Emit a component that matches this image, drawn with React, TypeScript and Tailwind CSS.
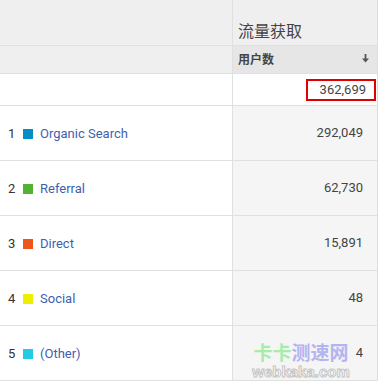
import React from "react";

type Row = {
  rank: number;
  label: string;
  color: string;
  users: string;
};

const rows: Row[] = [
  { rank: 1, label: "Organic Search", color: "bg-[#058dc7]", users: "292,049" },
  { rank: 2, label: "Referral", color: "bg-[#50b432]", users: "62,730" },
  { rank: 3, label: "Direct", color: "bg-[#ed561b]", users: "15,891" },
  { rank: 4, label: "Social", color: "bg-[#edef00]", users: "48" },
  { rank: 5, label: "(Other)", color: "bg-[#24cbe5]", users: "4" },
];

const font = "font-['Roboto','Noto_Sans_CJK_SC',sans-serif]";

export default function App() {
  return (
    <div className={`relative w-[378px] bg-white border-r border-[#dedede] text-[#333] ${font}`}>
      {/* group header */}
      <div className="flex h-[46px] border-b border-[#e0e0e0] bg-[#efefef]">
        <div className="w-[232px]" />
        <div className="flex flex-1 items-end border-l border-[#e0e0e0] pl-[5px] pb-[3px]">
          <span className="text-[16px] leading-[20px] text-[#444]">流量获取</span>
        </div>
      </div>

      {/* column header */}
      <div className="flex h-[28px] border-b border-[#e0e0e0] bg-[#efefef]">
        <div className="w-[232px]" />
        <div className="flex flex-1 items-center justify-between border-l border-[#e0e0e0] bg-[#e6e6e6] pl-[5px] pr-[8px]">
          <span className="text-[12px] font-bold text-[#444]">用户数</span>
          <svg width="7" height="9" viewBox="0 0 7 9" className="mb-[3px]">
            <rect x="2.6" y="0" width="1.8" height="5" fill="#555" />
            <path d="M0 4.5 L7 4.5 L3.5 8.5 Z" fill="#555" />
          </svg>
        </div>
      </div>

      {/* total */}
      <div className="flex h-[32px] border-b border-[#e0e0e0]">
        <div className="w-[232px]" />
        <div className="flex flex-1 items-center justify-end border-l border-[#e0e0e0] pr-[1px] pt-[1px]">
          <div className="flex h-[22px] w-[70px] items-center justify-end border-2 border-[#e00000] pr-[8px] text-[13px] text-[#444]">
            362,699
          </div>
        </div>
      </div>

      {/* data rows */}
      {rows.map((r) => (
        <div key={r.rank} className="flex h-[55px] border-b border-[#e0e0e0]">
          <div className="flex w-[232px] items-center pl-[8px] pt-[2px] text-[13px]">
            <span className="w-[15px] text-[#333]">{r.rank}</span>
            <span className={`mr-[7px] h-[10px] w-[10px] ${r.color}`} />
            <span className="text-[#3f5fae]">{r.label}</span>
          </div>
          <div className="flex flex-1 items-center justify-end border-l border-[#e0e0e0] bg-[#f5f5f5] pr-[14px] text-[13px] text-[#444]">
            {r.users}
          </div>
        </div>
      ))}

      {/* watermark */}
      <div className="pointer-events-none absolute left-[253px] top-[342px] flex w-[96px] flex-col items-center">
        <div className="text-[19px] leading-[23px] font-bold whitespace-nowrap">
          <span className="text-[#a8ecaa]">卡卡</span>
          <span className="text-[#b3b4f0]">测速网</span>
        </div>
        <div className="text-[15px] leading-[14px] font-bold whitespace-nowrap text-white font-['Liberation_Sans',sans-serif] [-webkit-text-stroke:1px_#c4c4c4]">
          webkaka.com
        </div>
      </div>
    </div>
  );
}
